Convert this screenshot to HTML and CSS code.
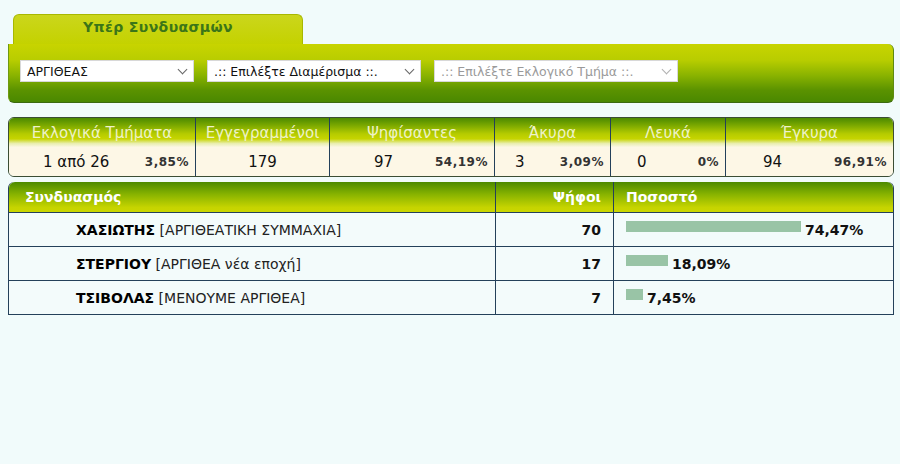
FILE: index.html
```html
<!DOCTYPE html>
<html lang="el">
<head>
<meta charset="utf-8">
<link rel="stylesheet" href="styles.css">
</head>
<body>
<div class="page">
  <div class="tab">Υπέρ Συνδυασμών</div>
  <div class="panel">
    <div class="sel sel1"><span>ΑΡΓΙΘΕΑΣ</span><i class="chev"></i></div>
    <div class="sel sel2"><span>.:: Επιλέξτε Διαμέρισμα ::.</span><i class="chev"></i></div>
    <div class="sel sel3 disabled"><span>.:: Επιλέξτε Εκλογικό Τμήμα ::.</span><i class="chev"></i></div>
  </div>

  <table class="stats">
    <colgroup>
      <col class="c1"><col class="c2"><col class="c3"><col class="c4"><col class="c5"><col>
    </colgroup>
    <tr class="shead">
      <th>Εκλογικά Τμήματα</th>
      <th>Εγγεγραμμένοι</th>
      <th>Ψηφίσαντες</th>
      <th>Άκυρα</th>
      <th>Λευκά</th>
      <th>Έγκυρα</th>
    </tr>
    <tr class="sdata">
      <td><div class="pair"><span class="v v1">1 από 26</span><b>3,85%</b></div></td>
      <td class="center">179</td>
      <td><div class="pair"><span class="v v3">97</span><b>54,19%</b></div></td>
      <td><div class="pair"><span class="v v4">3</span><b>3,09%</b></div></td>
      <td><div class="pair"><span class="v v5">0</span><b>0%</b></div></td>
      <td><div class="pair"><span class="v v6">94</span><b>96,91%</b></div></td>
    </tr>
  </table>

  <table class="results">
    <colgroup>
      <col class="rc1"><col class="rc2"><col>
    </colgroup>
    <tr class="rhead">
      <th class="h1">Συνδυασμός</th>
      <th class="h2">Ψήφοι</th>
      <th class="h3">Ποσοστό</th>
    </tr>
    <tr>
      <td class="name"><b>ΧΑΣΙΩΤΗΣ</b> [ΑΡΓΙΘΕΑΤΙΚΗ ΣΥΜΜΑΧΙΑ]</td>
      <td class="votes">70</td>
      <td class="pct"><span class="bar" style="width:175px"></span><b>74,47%</b></td>
    </tr>
    <tr>
      <td class="name"><b>ΣΤΕΡΓΙΟΥ</b> [ΑΡΓΙΘΕΑ νέα εποχή]</td>
      <td class="votes">17</td>
      <td class="pct"><span class="bar" style="width:42px"></span><b>18,09%</b></td>
    </tr>
    <tr>
      <td class="name"><b>ΤΣΙΒΟΛΑΣ</b> [ΜΕΝΟΥΜΕ ΑΡΓΙΘΕΑ]</td>
      <td class="votes">7</td>
      <td class="pct"><span class="bar" style="width:17px"></span><b>7,45%</b></td>
    </tr>
  </table>
</div>
</body>
</html>
```

FILE: styles.css
```css
html, body {
  margin: 0;
  padding: 0;
  background: #f1fbfb;
}
body {
  font-family: "DejaVu Sans", Verdana, sans-serif;
  color: #111;
}
.page {
  width: 886px;
  padding: 14px 0 0 8px;
}
.tab {
  margin-left: 5px;
  width: 290px;
  height: 30px;
  box-sizing: border-box;
  background: linear-gradient(#cbd61c, #c4d200);
  border: 1px solid #a8b800;
  border-bottom: none;
  border-radius: 6px 6px 0 0;
  color: #3b7518;
  font-weight: bold;
  font-size: 14px;
  letter-spacing: 0.4px;
  text-align: center;
  padding-top: 4px;
}
.panel {
  height: 59px;
  box-sizing: border-box;
  background: linear-gradient(#c8d400 0%, #b8cd00 28%, #88b200 55%, #5a9200 80%, #4a8800 100%);
  border-radius: 0 6px 6px 6px;
  border-bottom: 1px solid #3c6a10;
  border-left: 1px solid #6f9a10;
  border-right: 1px solid #5c8a10;
  display: flex;
  align-items: flex-start;
  padding: 16px 0 0 11px;
  gap: 13px;
}
.sel {
  height: 22px;
  box-sizing: border-box;
  background: #fff;
  border: 1px solid #d8d8d8;
  display: flex;
  align-items: center;
  justify-content: space-between;
  padding: 0 5px 0 6px;
  font-size: 12.5px;
  color: #111;
  white-space: nowrap;
  overflow: hidden;
}
.sel span { overflow: hidden; }
.sel1 { width: 174px; }
.sel2 { width: 214px; }
.sel3 { width: 244px; }
.disabled { color: #9a9a9a; }
.chev {
  flex: none;
  width: 6px;
  height: 6px;
  border-right: 1px solid #666;
  border-bottom: 1px solid #666;
  transform: rotate(45deg);
  margin-top: -4px;
  margin-right: 2px;
  margin-left: 6px;
}
.disabled .chev { border-color: #b0b0b0; }

table {
  border-collapse: separate;
  border-spacing: 0;
  width: 886px;
  table-layout: fixed;
}
.stats {
  margin-top: 14px;
  border: 1px solid #3b4d35;
  border-radius: 6px;
  overflow: hidden;
}
.c1 { width: 186px; }
.c2 { width: 134px; }
.c3 { width: 165px; }
.c4 { width: 116px; }
.c5 { width: 115px; }
.shead th {
  height: 29px;
  padding: 6px 0 0 0;
  font-weight: normal;
  font-size: 15px;
  color: #eef2c8;
  background: linear-gradient(#4c8a00 0%, #7aa800 25%, #b6cc00 55%, #c6d400 72%, #e9eeb0 88%, #fbf7e4 100%);
  border-left: 1px solid #24405a;
  vertical-align: top;
  box-sizing: border-box;
}
.shead th:first-child, .sdata td:first-child { border-left: none; }
.sdata td {
  height: 29px;
  background: #fdf7e6;
  border-left: 1px solid #24405a;
  font-size: 15px;
  padding: 0;
}
.center { text-align: center; }
.pair {
  display: flex;
  align-items: center;
  justify-content: space-between;
  padding-right: 6px;
}
.pair b { font-size: 12px; letter-spacing: 0.5px; color: #333; }
.v1 { padding-left: 34px; }
.v3 { padding-left: 44px; }
.v4 { padding-left: 20px; }
.v5 { padding-left: 26px; }
.v6 { padding-left: 37px; }

.results {
  margin-top: 5px;
  border: 1px solid #24405a;
  border-top: none;
  border-radius: 6px 6px 0 0;
}
.rc1 { width: 486px; }
.rc2 { width: 118px; }
.rhead th {
  height: 30px;
  padding: 0;
  font-size: 14px;
  font-weight: bold;
  color: #fff;
  background: linear-gradient(#4c8a00 0%, #86b200 40%, #c6d400 85%, #cad600 100%);
  text-align: left;
}
.rhead .h1 { border-top-left-radius: 6px; padding-left: 16px; }
.rhead .h2 { text-align: right; padding-right: 12px; border-left: 1px solid #24405a; }
.rhead .h3 { border-top-right-radius: 6px; padding-left: 12px; border-left: 1px solid #24405a; }
.results td {
  height: 33px;
  background: #f3fbfb;
  border-top: 1px solid #24405a;
  font-size: 14px;
  padding: 0;
}
.results td.name { padding-left: 67px; color: #222; }
.name b { color: #000; }
.results td.votes {
  text-align: right;
  padding-right: 12px;
  font-weight: bold;
  border-left: 1px solid #24405a;
}
.results td.pct {
  padding-left: 12px;
  border-left: 1px solid #24405a;
  white-space: nowrap;
}
.pct b { font-size: 14px; vertical-align: middle; color: #111; }
.bar {
  display: inline-block;
  height: 11px;
  background: #99c4a6;
  vertical-align: middle;
  margin-right: 4px;
  margin-top: -8px;
}
```
